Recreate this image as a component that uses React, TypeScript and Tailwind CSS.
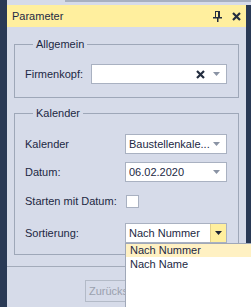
import React from "react";

const ArrowDown = ({ className }: { className?: string }) => (
  <svg width="7" height="4" viewBox="0 0 7 4" className={className}>
    <path d="M0 0 L7 0 L3.5 4 Z" fill="currentColor" />
  </svg>
);

const PinIcon = () => (
  <svg width="9" height="11" viewBox="0 0 9 11" className="text-[#232d3f]">
    <rect x="2.5" y="0.5" width="4" height="6" fill="none" stroke="currentColor" />
    <rect x="5" y="1" width="2" height="5" fill="currentColor" />
    <rect x="0" y="6" width="9" height="1.5" fill="currentColor" />
    <rect x="4" y="7" width="1.5" height="4" fill="currentColor" />
  </svg>
);

const CloseIcon = ({ size = 9 }: { size?: number }) => (
  <svg width={size} height={size} viewBox="0 0 9 9" className="text-[#232d3f]">
    <path d="M1 1 L8 8 M8 1 L1 8" stroke="currentColor" strokeWidth="2.2" />
  </svg>
);

const Combo = ({ value }: { value: string }) => (
  <div className="flex items-center w-[102px] h-[20px] bg-white border border-[#a9b1c1] pl-[3px] pr-[6px]">
    <span className="flex-1 truncate leading-[18px]">{value}</span>
    <ArrowDown className="text-[#8a93a4]" />
  </div>
);

export default function App() {
  return (
    <div className="relative w-[251px] h-[307px] overflow-hidden bg-[#293955] flex flex-col text-[11px] text-[#1c2843] font-['Liberation_Sans',Arial,sans-serif]">
      {/* top band */}
      <div className="flex h-[5px] pl-[7px]">
        <div className="w-[58px] bg-[#d6dbe9]" />
        <div className="flex-1 bg-[#d6dbe9] border-t-2 border-[#a8b0c0]" />
      </div>

      <div className="flex flex-1">
        <div className="w-[7px]" />
        <div className="w-[239px] flex flex-col">
          {/* header */}
          <div className="h-[22px] bg-[#ffef9e] flex items-center pl-[5px] pr-[5px]">
            <span className="flex-1 text-[#1e2a44]">Parameter</span>
            <div className="flex items-center gap-[10px]">
              <PinIcon />
              <CloseIcon />
            </div>
          </div>

          {/* body */}
          <div className="flex-1 bg-[#d6dbe9] px-[7px] pt-[11px] flex flex-col">
            <fieldset className="border border-[#9ea7b8] px-[10px] pt-[13px] pb-[13px]">
              <legend className="ml-[8px] px-[3px] leading-[13px]">Allgemein</legend>
              <div className="flex items-center">
                <span className="w-[66px]">Firmenkopf:</span>
                <div className="flex items-center w-[136px] h-[20px] bg-white border border-[#a9b1c1] pr-[6px]">
                  <div className="flex-1" />
                  <CloseIcon size={9} />
                  <ArrowDown className="ml-[8px] text-[#8a93a4]" />
                </div>
              </div>
            </fieldset>

            <fieldset className="mt-[9px] border border-[#9ea7b8] px-[10px] pt-[14px] pb-[11px]">
              <legend className="ml-[8px] px-[3px] leading-[13px]">Kalender</legend>
              <div className="flex items-center h-[20px]">
                <span className="w-[100px]">Kalender</span>
                <Combo value="Baustellenkale..." />
              </div>
              <div className="flex items-center h-[20px] mt-[8px]">
                <span className="w-[100px]">Datum:</span>
                <Combo value="06.02.2020" />
              </div>
              <div className="flex items-center h-[20px] mt-[9px]">
                <span className="w-[101px]">Starten mit Datum:</span>
                <div className="w-[13px] h-[13px] bg-white border border-[#a9b1c1]" />
              </div>
              <div className="flex items-center h-[20px] mt-[12px]">
                <span className="w-[100px]">Sortierung:</span>
                <div className="flex items-stretch w-[102px] h-[20px] bg-white border border-[#a9b1c1]">
                  <span className="flex-1 pl-[3px] leading-[18px]">Nach Nummer</span>
                  <div className="w-[16px] bg-[#ffef9e] border-l border-[#e3d08a] flex items-center justify-center">
                    <ArrowDown className="text-[#1c2433]" />
                  </div>
                </div>
              </div>
            </fieldset>

            <div className="-mx-[7px] mt-[11px] h-px bg-[#a3abba]" />

            <button
              disabled
              className="ml-[71px] mt-[13px] w-[80px] h-[22px] border border-[#b3bac7] text-left pl-[3px] text-[#9aa1ae]"
            >
              Zurücksetzen
            </button>
          </div>
        </div>
        <div className="flex-1" />
      </div>

      {/* open dropdown list */}
      <div className="absolute left-[125px] top-[243px] w-[140px] h-[80px] bg-white border border-[#a0a8b8] flex flex-col">
        <div className="h-[13px] leading-[13px] pl-[4px] bg-[#fff1c3]">Nach Nummer</div>
        <div className="h-[14px] leading-[14px] pl-[4px]">Nach Name</div>
      </div>
    </div>
  );
}
